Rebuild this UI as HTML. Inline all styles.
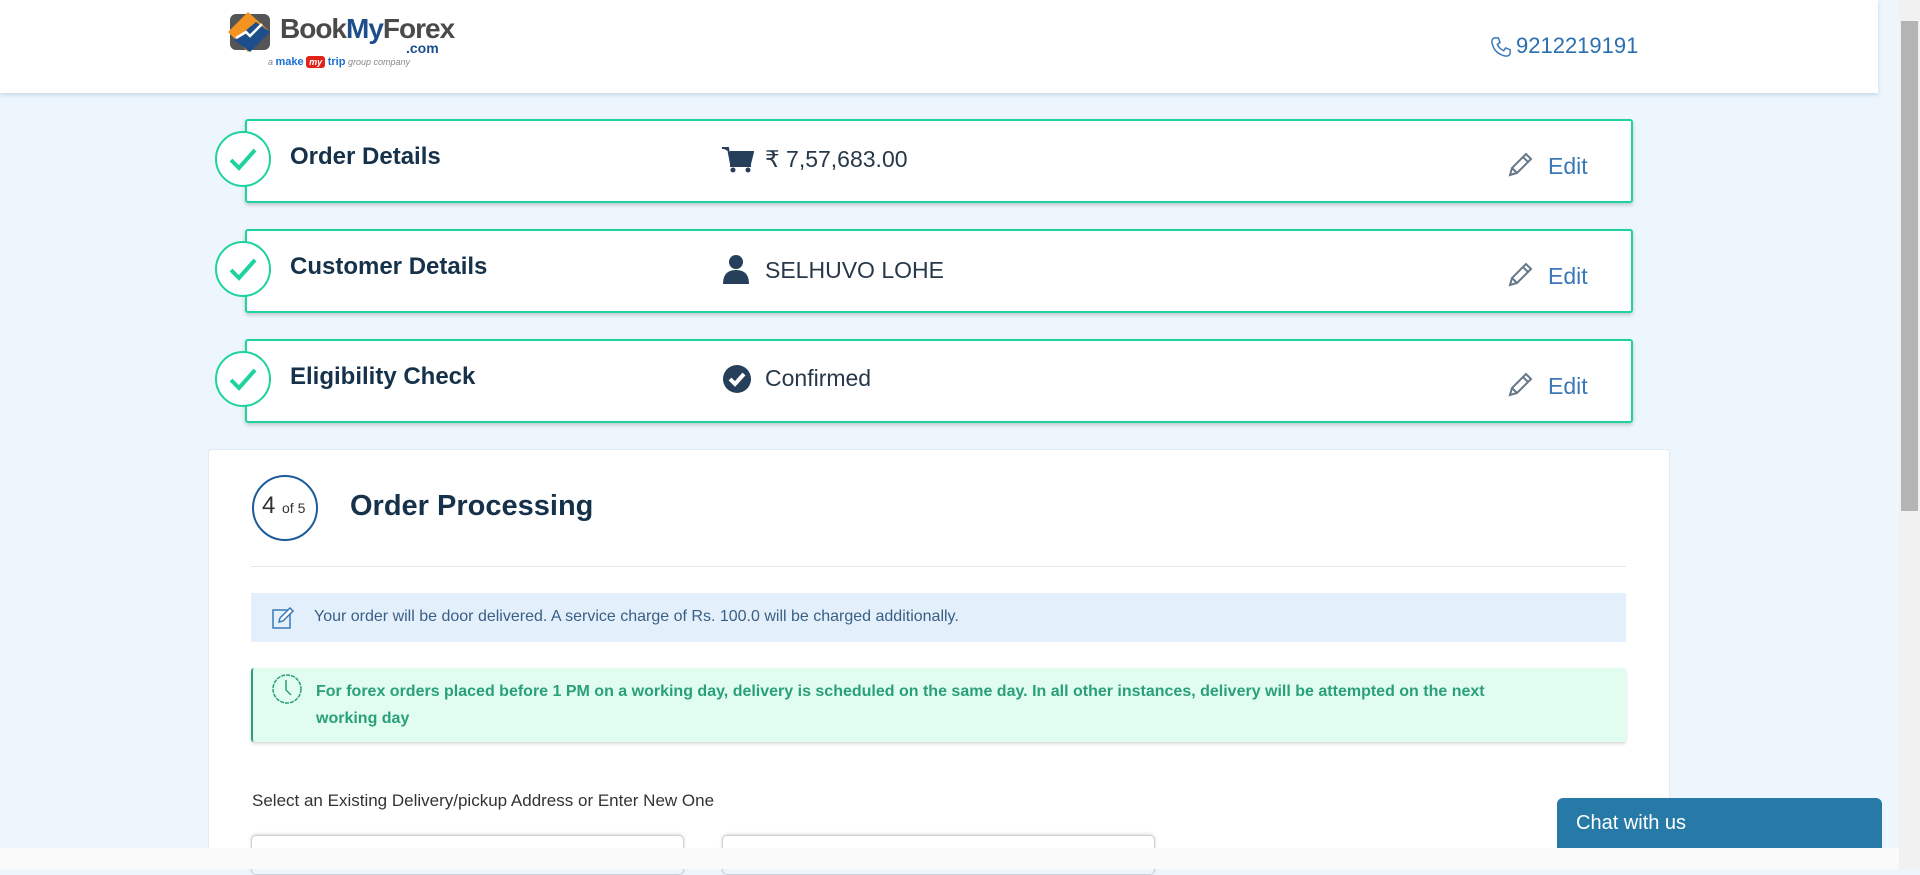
<!DOCTYPE html>
<html><head><meta charset="utf-8"><style>
*{box-sizing:border-box;margin:0;padding:0}
body{width:1920px;height:869px;overflow:hidden;background:#edf6fd;font-family:"Liberation Sans",sans-serif;position:relative;color:#1d3549}
.abs{position:absolute}
.header{left:0;top:0;width:1878px;height:93px;background:#fff;box-shadow:0 2px 4px rgba(120,160,200,.35)}
.card{left:245px;width:1388px;height:84px;background:#fff;border:2px solid #1fd3a0;border-radius:3px;box-shadow:0 2px 4px rgba(0,0,0,.2)}
.chk{left:215px;width:56px;height:56px;border:2px solid #1fd3a0;border-radius:50%;background:#fff}
.ttl{left:290px;font-size:24px;font-weight:bold;color:#16324a}
.val{left:765px;font-size:23px;color:#27384a}
.edit{left:1548px;font-size:23px;color:#3a78b8}
</style></head><body>
<div class="abs header"></div>
<!-- logo -->
<svg class="abs" style="left:226px;top:10px" width="50" height="46" viewBox="0 0 50 46">
<rect x="4" y="4" width="40" height="36" rx="6" fill="#555"/>
<path d="M2 22 L22 2 L42 20 L22 42Z" fill="#f39321"/>
<path d="M8 30 L30 12 L44 22 L24 42Z" fill="#1d4e8c"/>
<path d="M10 28 L20 22 L24 26 L36 14" stroke="#fff" stroke-width="2.5" fill="none"/>
</svg>
<div class="abs" style="left:280px;top:13px;font-size:28px;font-weight:bold;color:#4a4a4a;letter-spacing:-1px">Book<span style="color:#1d4e8c">My</span>Forex</div>
<div class="abs" style="left:406px;top:40px;font-size:14px;font-weight:bold;color:#1d4e8c">.com</div>
<div class="abs" style="left:268px;top:56px;font-size:9px;color:#888;font-style:italic">a <b style="color:#1a6fd1;font-style:normal;font-size:11px">make</b> <span style="background:#e2231a;color:#fff;padding:1px 3px;border-radius:3px;font-weight:bold">my</span> <b style="color:#1a6fd1;font-style:normal;font-size:11px">trip</b> group company</div>
<!-- phone -->
<svg class="abs" style="left:1490px;top:35px" width="22" height="24" viewBox="0 0 24 24"><path d="M5 2 L9 2 L11 7 L8 9 Q10 14 15 16 L17 13 L22 15 L22 19 Q21 22 18 22 Q4 20 2 6 Q2 3 5 2Z" fill="none" stroke="#3a78b8" stroke-width="1.6"/></svg>
<div class="abs" style="left:1516px;top:33px;font-size:22px;color:#2a6fb0">9212219191</div>
<!-- cards -->
<div class="abs card" style="top:119px"></div>
<div class="abs card" style="top:229px"></div>
<div class="abs card" style="top:339px"></div>
<div class="abs chk" style="top:131px"></div>
<div class="abs chk" style="top:241px"></div>
<div class="abs chk" style="top:351px"></div>
<svg class="abs" style="left:228px;top:146px" width="30" height="26"><path d="M3 14 L11 22 L27 4" stroke="#1fd3a0" stroke-width="4" fill="none"/></svg>
<svg class="abs" style="left:228px;top:256px" width="30" height="26"><path d="M3 14 L11 22 L27 4" stroke="#1fd3a0" stroke-width="4" fill="none"/></svg>
<svg class="abs" style="left:228px;top:366px" width="30" height="26"><path d="M3 14 L11 22 L27 4" stroke="#1fd3a0" stroke-width="4" fill="none"/></svg>
<div class="abs ttl" style="top:143px">Order Details</div>
<div class="abs ttl" style="top:253px">Customer Details</div>
<div class="abs ttl" style="top:363px">Eligibility Check</div>
<svg class="abs" style="left:722px;top:146px" width="32" height="28" viewBox="0 0 32 28"><path d="M0 2 H6 L9 18 H28 L31 6 H8" fill="#263f5a" stroke="#263f5a" stroke-width="2"/><rect x="8" y="18" width="21" height="3" fill="#263f5a"/><circle cx="11" cy="24" r="2.5" fill="#263f5a"/><circle cx="26" cy="24" r="2.5" fill="#263f5a"/></svg>
<div class="abs val" style="top:146px">₹ 7,57,683.00</div>
<svg class="abs" style="left:722px;top:254px" width="28" height="30" viewBox="0 0 28 30"><circle cx="14" cy="8" r="7" fill="#263f5a"/><path d="M1 30 Q1 16 14 16 Q27 16 27 30Z" fill="#263f5a"/></svg>
<div class="abs val" style="top:257px">SELHUVO LOHE</div>
<svg class="abs" style="left:722px;top:364px" width="30" height="30"><circle cx="15" cy="15" r="14" fill="#263f5a"/><path d="M8 15 L13 20 L22 10" stroke="#fff" stroke-width="4" fill="none"/></svg>
<div class="abs val" style="top:365px">Confirmed</div>
<svg class="abs" style="left:1507px;top:152px" width="26" height="26" viewBox="0 0 26 26"><path d="M3 23 L5 16 L19 2 L24 7 L10 21Z M5 16 L10 21 M16 5 L21 10" fill="none" stroke="#667788" stroke-width="2"/></svg>
<svg class="abs" style="left:1507px;top:262px" width="26" height="26" viewBox="0 0 26 26"><path d="M3 23 L5 16 L19 2 L24 7 L10 21Z M5 16 L10 21 M16 5 L21 10" fill="none" stroke="#667788" stroke-width="2"/></svg>
<svg class="abs" style="left:1507px;top:372px" width="26" height="26" viewBox="0 0 26 26"><path d="M3 23 L5 16 L19 2 L24 7 L10 21Z M5 16 L10 21 M16 5 L21 10" fill="none" stroke="#667788" stroke-width="2"/></svg>
<div class="abs edit" style="top:153px">Edit</div>
<div class="abs edit" style="top:263px">Edit</div>
<div class="abs edit" style="top:373px">Edit</div>
<!-- main card -->
<div class="abs" style="left:208px;top:449px;width:1462px;height:420px;background:#fff;border:1px solid #e2ebf3;border-radius:4px"></div>
<div class="abs" style="left:252px;top:475px;width:66px;height:66px;border:2px solid #1d5a9a;border-radius:50%"></div>
<div class="abs" style="left:262px;top:492px;font-size:24px;color:#333">4 <span style="font-size:14px">of 5</span></div>
<div class="abs" style="left:350px;top:490px;font-size:29px;font-weight:bold;color:#16324a">Order Processing</div>
<div class="abs" style="left:251px;top:566px;width:1375px;height:1px;background:#e6e6e6"></div>
<div class="abs" style="left:251px;top:593px;width:1375px;height:49px;background:#e3f0fb"></div>
<svg class="abs" style="left:271px;top:606px" width="24" height="24" viewBox="0 0 24 24"><rect x="2" y="4" width="17" height="18" fill="none" stroke="#3a78b8" stroke-width="1.5"/><path d="M8 16 L9 12 L19 2 L22 5 L12 15Z" fill="#fff" stroke="#3a78b8" stroke-width="1.5"/></svg>
<div class="abs" style="left:314px;top:608px;font-size:16px;color:#3a5f85">Your order will be door delivered. A service charge of Rs. 100.0 will be charged additionally.</div>
<div class="abs" style="left:251px;top:668px;width:1375px;height:74px;background:#e1fdf0;border-left:2px solid #2aa07a;border-radius:3px;box-shadow:0 2px 3px rgba(0,0,0,.15)"></div>
<svg class="abs" style="left:271px;top:673px" width="32" height="32"><circle cx="16" cy="16" r="14" fill="none" stroke="#2aa07a" stroke-width="1.5" stroke-dasharray="4 1"/><path d="M15 7 V17 L20 22" stroke="#2aa07a" stroke-width="1.5" fill="none"/></svg>
<div class="abs" style="left:316px;top:678px;width:1215px;font-size:16px;font-weight:bold;color:#2aa07a;line-height:27px">For forex orders placed before 1 PM on a working day, delivery is scheduled on the same day. In all other instances, delivery will be attempted on the next working day</div>
<div class="abs" style="left:252px;top:791px;font-size:17px;color:#333">Select an Existing Delivery/pickup Address or Enter New One</div>
<div class="abs" style="left:251px;top:835px;width:433px;height:40px;border:1px solid #c8d0d8;border-radius:5px;box-shadow:0 -1px 3px rgba(0,0,0,.15)"></div>
<div class="abs" style="left:722px;top:835px;width:433px;height:40px;border:1px solid #c8d0d8;border-radius:5px;box-shadow:0 -1px 3px rgba(0,0,0,.15)"></div>
<div class="abs" style="left:1557px;top:798px;width:325px;height:60px;background:#2779a7;border-radius:6px 6px 0 0"></div>
<div class="abs" style="left:1576px;top:812px;font-size:20px;color:#fff">Chat with us</div>
<!-- scrollbars -->
<div class="abs" style="left:1899px;top:0;width:21px;height:869px;background:#f1f1f1"></div>
<div class="abs" style="left:1901px;top:21px;width:17px;height:490px;background:#b4b4b4"></div>
<div class="abs" style="left:0;top:848px;width:1899px;height:21px;background:#fafafa"></div>
</body></html>
